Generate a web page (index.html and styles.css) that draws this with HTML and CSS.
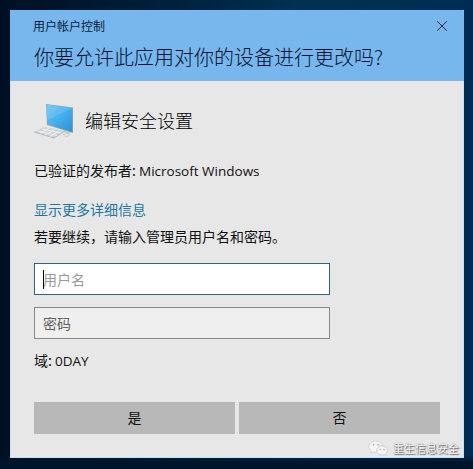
FILE: index.html
```html
<!DOCTYPE html>
<html lang="zh-CN">
<head>
<meta charset="utf-8">
<title>用户帐户控制</title>
<link rel="stylesheet" href="styles.css">
</head>
<body>
<main class="dialog">
  <header class="header">
    <div class="titlebar">
      <span>用户帐户控制</span>
      <svg class="close" width="12" height="12" viewBox="0 0 12 12"><path d="M1 1L11 11M11 1L1 11"/></svg>
    </div>
    <h1 class="question">你要允许此应用对你的设备进行更改吗?</h1>
  </header>
  <section class="content">
    <div class="app">
      <svg class="app-icon" width="42" height="38" viewBox="0 0 42 38">
        <defs><linearGradient id="screen" x1="0" y1="0" x2="1" y2="1"><stop offset="0" stop-color="#72c8f5"/><stop offset=".5" stop-color="#45aeea"/><stop offset="1" stop-color="#2b91d4"/></linearGradient></defs>
        <path d="M26 25L30 27V30L35 32L38 30L33 28V26Z" fill="#c8d0d5"/>
        <path d="M12 2L39 5.500V31L13 23Z" fill="#8fa6b2"/>
        <path d="M12.500 2.800L38.300 6.300V30L13.700 22.300Z" fill="url(#screen)"/>
        <path d="M12.500 2.800L38.300 6.300L13.500 18Z" fill="#8bd4fa" opacity=".25"/>
        <path d="M0 30L10 25L31 29L20 36Z" fill="#cfd3d6"/>
        <path d="M0 30L20 36L31 29" fill="none" stroke="#a8afb4" stroke-width=".8"/>
        <path d="M4 29L23 33.500M8 27L27 31M6 31L15 26.500M11 33L20 28M16 34.500L25 29" stroke="#f1f3f4" stroke-width=".9" fill="none"/>
        <path d="M29 32.500L33 31L36 33L32 35Z" fill="#dfe2e4" stroke="#babfc2" stroke-width=".6"/>
      </svg>
      <h2 class="app-name">编辑安全设置</h2>
    </div>
    <p class="publisher">已验证的发布者: <span class="latin">Microsoft Windows</span></p>
    <a class="details">显示更多详细信息</a>
    <p class="prompt">若要继续，请输入管理员用户名和密码。</p>
    <div class="field field-active"><i class="caret"></i>用户名</div>
    <div class="field">密码</div>
    <p class="domain">域: <span class="latin">0DAY</span></p>
    <div class="actions">
      <button class="button">是</button>
      <button class="button">否</button>
    </div>
  </section>
</main>
<div class="watermark">
  <svg width="20" height="17" viewBox="0 0 20 17">
    <path d="M8 1C3.500 1 .8 3.500 .8 6.500C.8 8.500 1.800 9.800 3.300 10.800L2.800 13L5.300 11.700C7 12.200 8 12 9 11.800C8.500 8 11 5.500 15 5.500C14.500 3 12 1 8 1Z"/>
    <path d="M14 6C10.800 6 8.600 8 8.600 10.500C8.600 13.200 11 15 14 15L16 14.700L18 15.800L17.500 14C19 13 19.500 12 19.500 10.500C19.500 8 17 6 14 6Z"/>
    <g class="eyes"><circle cx="5.500" cy="4.800" r=".8"/><circle cx="10" cy="4.800" r=".8"/><circle cx="12.200" cy="9.500" r=".7"/><circle cx="16" cy="9.500" r=".7"/></g>
  </svg>
  <span>重生信息安全</span>
</div>
</body>
</html>
```

FILE: styles.css
```css
* { box-sizing: border-box; }
body {
  margin: 0;
  width: 473px;
  height: 469px;
  padding: 10px 9px 11px 10px;
  overflow: hidden;
  background:
    linear-gradient(180deg, transparent 455px, #00152b 462px),
    linear-gradient(90deg, #001024 0, #001830 20%, #003154 65%, #002c53 100%);
  font-family: "Noto Sans CJK SC", sans-serif;
  font-size: 14px;
  font-weight: 400;
  color: #111;
}
h1, h2, p { margin: 0; font-weight: inherit; }
.dialog { width: 454px; height: 448px; background: #e7e7e7; border: 1px solid #c7e2f8; border-top-color: #79b9ee; }
.header { height: 70px; margin: 0 -1px; padding: 6px 16px 0 24px; background: #77b7ed; color: #061c3a; }
.titlebar { display: flex; justify-content: space-between; height: 18px; font-size: 12px; line-height: 18px; }
.titlebar span { margin-left: -1px; }
.close { margin: 3px 0 0; fill: none; stroke: #13294a; stroke-width: 1; }
.question { margin-top: 7px; font-size: 20px; font-weight: 300; line-height: 30px; white-space: nowrap; color: #001230; }
.content { padding: 21px 23px 0; }
.app { display: flex; height: 40px; }
.app-icon { flex: none; }
.app-name { margin-left: 9px; font-size: 18px; font-weight: 300; line-height: 37px; color: #000; }
.publisher { margin-top: 18px; line-height: 20px; }
.latin { font-family: "Open Sans", "Noto Sans", sans-serif; font-size: 13.5px; }
.details { display: block; margin-top: 18px; line-height: 20px; color: #2377a3; }
.prompt { margin-top: 7px; line-height: 20px; }
.field { position: relative; width: 296px; height: 32px; margin-top: 12px; padding-left: 8px; border: 1px solid #888; background: #efefef; color: #606060; line-height: 31px; }
.prompt + .field { margin-top: 17px; }
.field-active { background: #fff; border-color: #35627d; color: #999; box-shadow: 0 0 2px #cce6f2; }
.caret { position: absolute; left: 8px; top: 6px; width: 1px; height: 19px; background: #000; }
.domain { margin-top: 11px; line-height: 20px; }
.actions { display: flex; gap: 4px; margin-top: 31px; }
.button { width: 201px; height: 32px; padding: 0 0 2px; border: 0; background: #b8b8b8; color: #111; font: inherit; line-height: 30px; }
.watermark { position: absolute; left: 368px; top: 439px; display: flex; gap: 5px; line-height: 18px; font-size: 11px; color: #f8f8f8; text-shadow: 1px 1px 1px #666, 0 0 1px #777; white-space: nowrap; }
.watermark svg { fill: #f5f5f5; stroke: #bbb; stroke-width: .5; margin-top: 1px; }
.watermark .eyes { fill: #999; stroke: none; }
```
